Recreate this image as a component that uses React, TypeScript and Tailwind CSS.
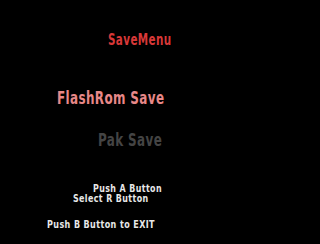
export default function App() {
  return (
    <div
      className="w-[320px] h-[244px] bg-black overflow-hidden flex flex-col items-start"
      style={{ fontFamily: '"DejaVu Sans Condensed", "DejaVu Sans", sans-serif' }}
    >
      <div className="mt-[32px] ml-[108px] origin-left scale-x-[0.77] text-[15px] leading-[16px] font-bold text-[#d83838] tracking-[0.5px] whitespace-nowrap">
        SaveMenu
      </div>
      <div className="mt-[40px] ml-[57px] origin-left scale-x-[0.78] text-[17px] leading-[20px] font-bold text-[#e88888] tracking-[0.5px] whitespace-nowrap">
        FlashRom Save
      </div>
      <div className="mt-[22px] ml-[98px] origin-left scale-x-[0.78] text-[17px] leading-[20px] font-bold text-[#444444] tracking-[0.5px] whitespace-nowrap">
        Pak Save
      </div>
      <div className="mt-[34px] ml-[93px] origin-left scale-x-[0.8] text-[11px] leading-[10px] font-bold text-[#e8e8e8] tracking-[0.5px] whitespace-nowrap">
        Push A Button
      </div>
      <div className="ml-[73px] origin-left scale-x-[0.8] text-[11px] leading-[10px] font-bold text-[#e8e8e8] tracking-[0.5px] whitespace-nowrap">
        Select R Button
      </div>
      <div className="mt-[16px] ml-[47px] origin-left scale-x-[0.81] text-[11px] leading-[10px] font-bold text-[#e8e8e8] tracking-[0.5px] whitespace-nowrap">
        Push B Button to EXIT
      </div>
    </div>
  );
}
